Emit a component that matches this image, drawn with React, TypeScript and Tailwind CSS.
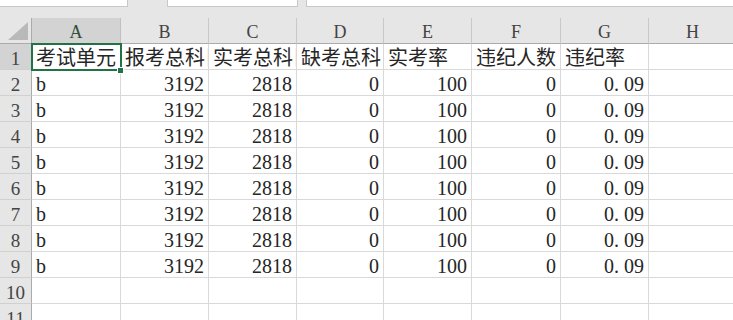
import React from "react";

const COLS = ["A", "B", "C", "D", "E", "F", "G", "H"];

const HEAD = ["考试单元", "报考总科目数", "实考总科目数", "缺考总科目数", "实考率", "违纪人数", "违纪率", ""];

const ROW = ["b", "3192", "2818", "0", "100", "0", "0.09", ""];

const FONT = "font-['Liberation_Serif','Noto_Sans_CJK_SC',serif]";

const Decimal = ({ value }: { value: string }) => {
  // monospaced-looking dot like the original sheet font
  const [a, b] = value.split(".");
  return (
    <span>
      {a}
      <span className="inline-block w-[10px]">.</span>
      {b}
    </span>
  );
};

const Cell = ({ value, row }: { value: string; row: number }) => {
  const numeric = row > 1 && /^[0-9.]+$/.test(value);
  return (
    <div
      className={`h-[26px] border-r border-b border-[#d9d9d9] bg-white overflow-hidden whitespace-nowrap flex items-center text-[20px] leading-none text-[#262626] pt-[3px] ${
        numeric ? "justify-end pr-[4px]" : "justify-start pl-[4px]"
      }`}
    >
      {value.includes(".") ? <Decimal value={value} /> : value}
    </div>
  );
};

export default function App() {
  const rows = Array.from({ length: 11 }, (_, i) => i + 1);

  return (
    <div className={`w-[733px] h-[320px] overflow-hidden bg-[#e6e6e6] relative ${FONT}`}>
      {/* formula bar remnants */}
      <div className="h-[7px] flex gap-0">
        <div className="w-[128px] bg-white border-b border-r border-[#c8c8c8]" />
        <div className="w-[39px]" />
        <div className="w-[131px] bg-white border-b border-x border-[#c8c8c8]" />
        <div className="w-[8px]" />
        <div className="flex-1 bg-white border-b border-l border-[#c8c8c8]" />
      </div>
      <div className="h-[11px]" />

      <div className="grid grid-cols-[32px_89px_88px_88px_87px_88px_89px_88px_88px]">
        {/* column headers */}
        <div className="h-[26px] border-r border-b border-[#ababab] bg-[#e6e6e6] flex items-end justify-end pr-[3px] pb-[3px]">
          <svg width="20" height="18" viewBox="0 0 20 18">
            <polygon points="20,0 20,18 0,18" fill="#b9b9b9" />
          </svg>
        </div>
        {COLS.map((c, i) => (
          <div
            key={c}
            className={`h-[26px] border-r border-b flex items-center justify-center text-[18px] leading-none pt-[2px] ${
              i === 0
                ? "bg-[#d3d3d3] border-r-[#c0c0c0] border-b-[#ababab] text-[#2f4f3a]"
                : "bg-[#e6e6e6] border-r-[#c8c8c8] border-b-[#ababab] text-[#444]"
            }`}
          >
            {c}
          </div>
        ))}

        {rows.map((r) => (
          <React.Fragment key={r}>
            <div
              className={`h-[26px] border-r border-b border-r-[#ababab] border-b-[#d0d0d0] flex items-center justify-center text-[19px] leading-none pt-[3px] text-[#444] ${
                r === 1 ? "bg-[#d3d3d3]" : "bg-[#e6e6e6]"
              }`}
            >
              {r}
            </div>
            {(r === 1 ? HEAD : r <= 9 ? ROW : Array(8).fill("")).map((v, i) => (
              <Cell key={i} value={v} row={r} />
            ))}
          </React.Fragment>
        ))}
      </div>

      {/* active cell A1 */}
      <div className="absolute left-[31px] top-[43px] w-[91px] h-[28px] border-2 border-[#217346] pointer-events-none" />
      <div className="absolute left-[117px] top-[67px] w-[7px] h-[7px] bg-[#217346] border border-white" />
    </div>
  );
}
